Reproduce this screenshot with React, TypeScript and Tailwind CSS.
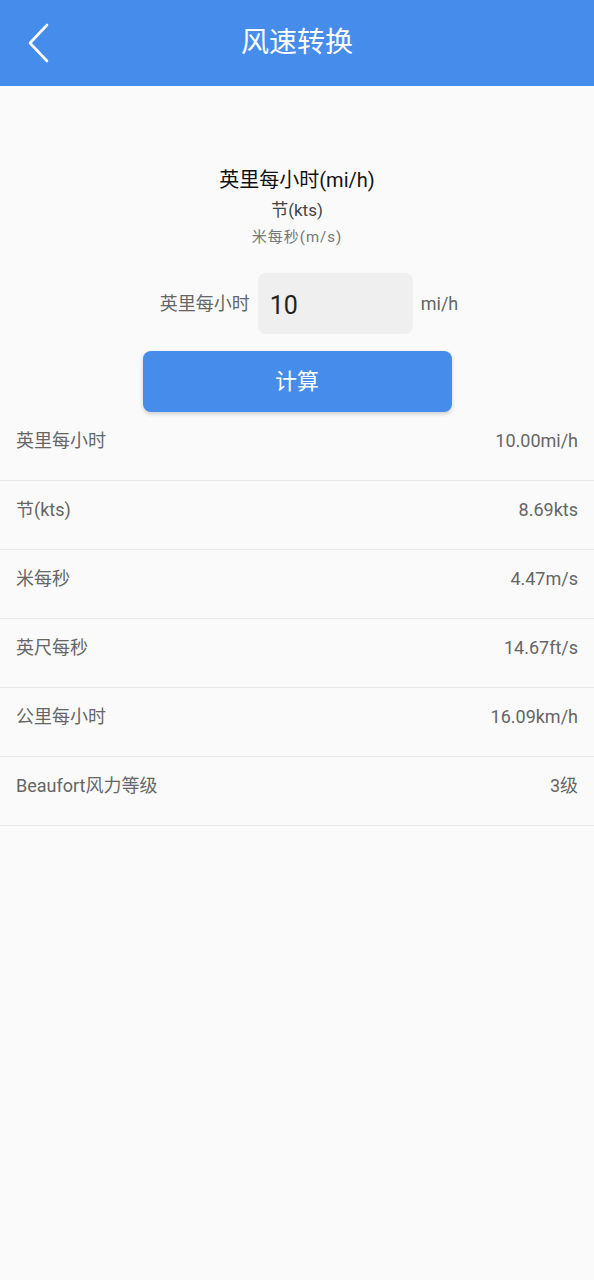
import { useState } from 'react';

const FONT = { fontFamily: 'Roboto, "Noto Sans CJK SC", sans-serif' };

interface ResultRow {
  label: string;
  value: string;
}

const ROWS: ResultRow[] = [
  { label: '英里每小时', value: '10.00mi/h' },
  { label: '节(kts)', value: '8.69kts' },
  { label: '米每秒', value: '4.47m/s' },
  { label: '英尺每秒', value: '14.67ft/s' },
  { label: '公里每小时', value: '16.09km/h' },
  { label: 'Beaufort风力等级', value: '3级' },
];

export default function App() {
  const [speed, setSpeed] = useState('10');

  return (
    <div className="min-h-[1280px] w-full bg-[#fafafa]" style={FONT}>
      {/* Header */}
      <div className="relative flex h-[86px] items-center justify-center bg-[#468ceb]">
        <button className="absolute left-[24px] top-[22px] flex h-[42px] w-[28px] items-center justify-center">
          <svg width="24" height="40" viewBox="0 0 24 40" fill="none">
            <path d="M21 2 L4 20 L21 38" stroke="white" strokeWidth="2.6" strokeLinecap="round" strokeLinejoin="round" />
          </svg>
        </button>
        <h1 className="text-[28px] leading-[36px] text-white">风速转换</h1>
      </div>

      {/* Units summary */}
      <div className="flex flex-col items-center pt-[80px]">
        <p className="text-[20px] leading-[28px] text-[#111]">英里每小时(mi/h)</p>
        <p className="mt-[4px] text-[17px] leading-[24px] text-[#444]">节(kts)</p>
        <p className="mt-[5px] text-[15px] leading-[20px] tracking-[1px] text-[#777]">米每秒(m/s)</p>
      </div>

      {/* Input */}
      <div className="mt-[26px] flex items-center justify-center pl-[24px]">
        <span className="mr-[8px] text-[18px] leading-[24px] text-[#666]">英里每小时</span>
        <input
          value={speed}
          onChange={(e) => setSpeed(e.target.value)}
          className="h-[61px] w-[155px] rounded-[8px] bg-[#efefef] px-[12px] pt-[4px] text-[25px] text-[#222] outline-none"
        />
        <span className="ml-[8px] text-[18px] leading-[24px] text-[#666]">mi/h</span>
      </div>

      <div className="mt-[17px] flex justify-center">
        <button className="h-[61px] w-[309px] rounded-[8px] bg-[#468ceb] text-[22px] text-white shadow-[0_2px_4px_rgba(0,0,0,0.18)]">
          计算
        </button>
      </div>

      {/* Results */}
      <div className="flex flex-col">
        {ROWS.map((row) => (
          <div
            key={row.label}
            className="flex h-[69px] justify-between border-b border-[#e8e8e8] px-[16px] pt-[17px] text-[18px] leading-[24px] text-[#666]"
          >
            <span>{row.label}</span>
            <span>{row.value}</span>
          </div>
        ))}
      </div>
    </div>
  );
}
